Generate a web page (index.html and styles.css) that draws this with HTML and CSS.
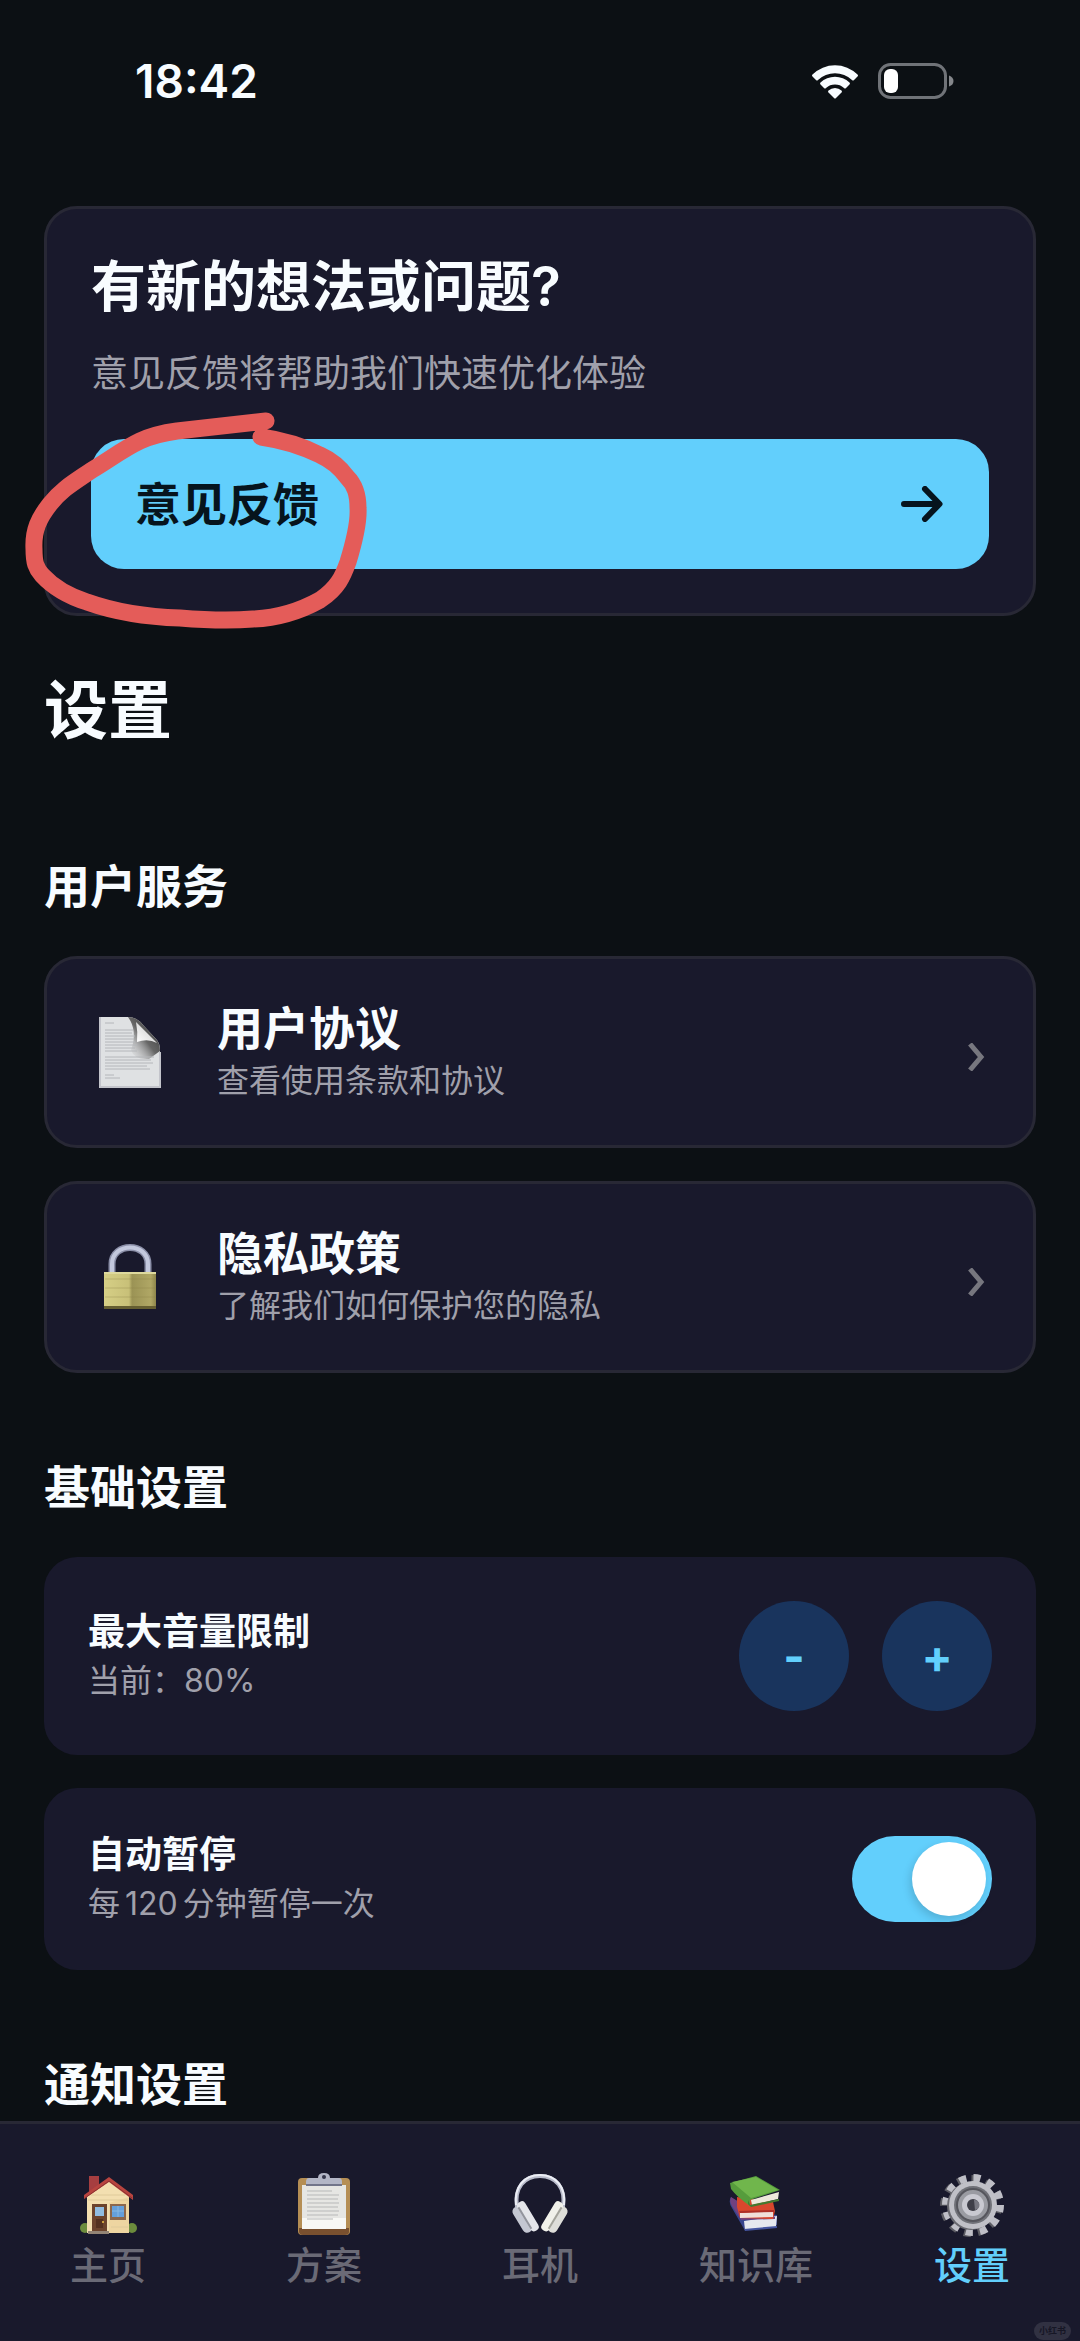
FILE: index.html
```html
<!DOCTYPE html>
<html lang="zh-CN">
<head>
  <meta charset="UTF-8" />
  <meta name="viewport" content="width=device-width, initial-scale=1.0"/>
  <title>设置</title>
  <link rel="stylesheet" href="styles.css">
</head>
<body>
  <header class="status-bar">
    <span class="time">18:42</span>
    <div class="status-icons">
      <svg width="48" height="36" viewBox="0 0 48 36" fill="#f8fcff" aria-hidden="true">
        <path d="M1.500 11.500A32 32 0 0 1 46.500 11.500Q47.500 12.500 46.500 13.500L43 17Q42 18 41 17A25 25 0 0 0 7 17Q6 18 5 17L1.500 13.500Q.500 12.500 1.500 11.500Z"/>
        <path d="M9.500 19.500A21 21 0 0 1 38.500 19.500Q39.500 20.500 38.500 21.500L35 25Q34 26 33 25A13.500 13.500 0 0 0 15 25Q14 26 13 25L9.500 21.500Q8.500 20.500 9.500 19.500Z"/>
        <path d="M17.500 27.500A9.500 9.500 0 0 1 30.500 27.500Q31.500 28.500 30.500 29.500L25 35Q24 36 23 35L17.500 29.500Q16.500 28.500 17.500 27.500Z"/>
      </svg>
      <svg width="76" height="36" viewBox="0 0 76 36" aria-hidden="true">
        <rect x="1.500" y="1.500" width="66" height="33" rx="11" fill="none" stroke="#707378" stroke-width="3"/>
        <rect x="6" y="6" width="14" height="24" rx="6" fill="#fff"/>
        <path d="M71 12.500Q75.500 14 75.500 18Q75.500 22 71 23.500Z" fill="#85878b"/>
      </svg>
    </div>
  </header>

  <main class="content">
    <section class="feedback-card">
      <h2 class="feedback-title">有新的想法或问题?</h2>
      <p class="feedback-text">意见反馈将帮助我们快速优化体验</p>
      <button type="button" class="feedback-btn">
        <span>意见反馈</span>
        <svg width="42" height="36" viewBox="0 0 42 36" fill="none" stroke="#06141d" stroke-width="6" stroke-linecap="round" stroke-linejoin="round" aria-hidden="true">
          <path d="M3 18H38M24 3L38.500 18L24 33"/>
        </svg>
      </button>
      <!-- hand-drawn marker -->
      <svg class="marker" width="350" height="226" viewBox="24 408 350 226" fill="none" stroke="#e45c59" stroke-width="17" stroke-linecap="round" stroke-linejoin="round" aria-hidden="true">
        <path d="M266 421L177 431Q155 434 140 441C123 449 112 458 92 470C73 483 62 489 50 504C39 518 33 530 34 549C34 563 36 568 42 575C53 587 68 596 87 602C115 612 147 617 180 618C205 620 229 621 253 619C280 618 302 610 320 600C338 588 343 576 348 562C355 539 359 522 358 508C358 494 355 485 347 477C339 466 331 460 320 455C302 446 282 440 261 437"/>
      </svg>
    </section>

    <h1>设置</h1>

    <h2 class="section-title">用户服务</h2>
    <div class="card-list">
      <a href="#" class="link-card">
        <span class="card-icon">
          <svg width="62" height="72" viewBox="0 0 62 72" aria-hidden="true">
            <defs>
              <linearGradient id="curl" x1="0" y1="1" x2="1" y2="0"><stop offset="0" stop-color="#fff"/><stop offset=".6" stop-color="#dcdcdc"/><stop offset="1" stop-color="#888"/></linearGradient>
              <linearGradient id="curlShade" x1="1" y1="0" x2="0" y2="1"><stop offset="0" stop-color="#333"/><stop offset=".5" stop-color="#666"/><stop offset="1" stop-color="#dededf" stop-opacity="0"/></linearGradient>
            </defs>
            <path d="M1 1H29Q38 1 44 9L57 23Q61 27 61 34V71H1Z" fill="#dfe1e3"/>
            <path d="M29 1Q38 1 44 9L57 23Q61 27 61 35L50 43Q35 44 32 34Q39 15 29 1Z" fill="url(#curlShade)"/>
            <path d="M37 6Q39 16 38 26Q49 22 58 27Z" fill="url(#curl)"/>
            <path d="M6 7H15M6 14H34M6 17H33M6 20H36M6 23H35M6 26H36M6 29H38M6 32H36M6 35H38M6 41H55M6 44H52M6 47H54M6 50H48M6 53H51M6 59H15M6 62H21" stroke="#b4b6ba" stroke-width="1"/>
            <path d="M1 1V71H61V36" fill="none" stroke="#c3c4cb" stroke-width="2"/>
          </svg>
        </span>
        <span class="card-text">
          <span class="card-title">用户协议</span>
          <span class="card-desc">查看使用条款和协议</span>
        </span>
        <svg class="chevron" width="18" height="28" viewBox="0 0 18 28" fill="none" stroke="#77777f" stroke-width="5" aria-hidden="true"><path d="M3 1L14 14L3 27"/></svg>
      </a>
      <a href="#" class="link-card">
        <span class="card-icon">
          <svg width="54" height="66" viewBox="0 0 54 66" aria-hidden="true">
            <defs>
              <linearGradient id="brass"><stop offset="0" stop-color="#d6cf86"/><stop offset=".48" stop-color="#c8c078"/><stop offset=".54" stop-color="#9b9355"/><stop offset=".9" stop-color="#b0a765"/><stop offset="1" stop-color="#8d854a"/></linearGradient>
            </defs>
            <path d="M9 30V20C9 -2 45 -2 45 20V30" fill="none" stroke="#8b8fa8" stroke-width="7"/>
            <path d="M9 30V20C9 -2 45 -2 45 20V30" fill="none" stroke="#c3c8dd" stroke-width="4"/>
            <rect x="1" y="28" width="52" height="37" rx="1" fill="url(#brass)"/>
            <path d="M2 35H52M2 44H52M2 53H52" stroke="#8a8247" stroke-opacity=".35"/>
            <path d="M1 29H53" stroke="#ded99d" stroke-width="2"/>
            <path d="M1 62H53V65H1Z" fill="#655e31"/>
          </svg>
        </span>
        <span class="card-text">
          <span class="card-title">隐私政策</span>
          <span class="card-desc">了解我们如何保护您的隐私</span>
        </span>
        <svg class="chevron" width="18" height="28" viewBox="0 0 18 28" fill="none" stroke="#77777f" stroke-width="5" aria-hidden="true"><path d="M3 1L14 14L3 27"/></svg>
      </a>
    </div>

    <h2 class="section-title">基础设置</h2>
    <div class="card-list">
      <div class="setting-card">
        <div class="card-text">
          <span class="setting-title">最大音量限制</span>
          <span class="card-desc">当前：80%</span>
        </div>
        <div class="stepper">
          <button type="button" class="step-btn" aria-label="降低音量">-</button>
          <button type="button" class="step-btn" aria-label="提高音量">+</button>
        </div>
      </div>
      <div class="setting-card">
        <label class="card-text" for="autoPause">
          <span class="setting-title">自动暂停</span>
          <span class="card-desc">每<span class="minutes">120</span>分钟暂停一次</span>
        </label>
        <input type="checkbox" id="autoPause" class="switch" checked>
      </div>
    </div>

    <h2 class="section-title">通知设置</h2>
  </main>

  <nav class="tab-bar">
    <a href="#" class="tab">
      <svg width="64" height="64" viewBox="0 0 64 64" aria-hidden="true">
        <circle cx="9" cy="55" r="5" fill="#6c8c3d"/><circle cx="56" cy="55" r="5" fill="#6c8c3d"/>
        <path d="M13 3H23V13L13 21Z" fill="#a63e40"/>
        <path d="M11 22L33 7L53 22V60H11Z" fill="#f3dfb0"/>
        <path d="M33 60V30L53 24V60Z" fill="#ebcf98" opacity=".6"/>
        <path d="M15 22H49M12 27H52M35 54H52" stroke="#dfca9a"/>
        <path d="M8 26V22L33 4L57 22V27L33 9Z" fill="#b8443f"/>
        <path d="M9 25L33 8L56 25" fill="none" stroke="#8d3031"/>
        <rect x="16" y="31" width="15" height="27" fill="#6c432c"/>
        <rect x="19" y="34" width="9" height="9" fill="#91bce0"/>
        <path d="M20 46H27V55H20Z" fill="#54301f"/><circle cx="27" cy="49" r="1" fill="#f0c04a"/>
        <rect x="34" y="31" width="16" height="16" fill="#8c674d"/>
        <rect x="36" y="33" width="12" height="11" fill="#659fdb"/>
        <path d="M36 38H48M42 33V44" stroke="#89b7e1"/>
        <path d="M12 58H33V61H12Z" fill="#938475"/>
      </svg>
      <span>主页</span>
    </a>
    <a href="#" class="tab">
      <svg width="64" height="64" viewBox="0 0 64 64" aria-hidden="true">
        <rect x="6" y="5" width="52" height="57" rx="4" fill="#b58e54"/>
        <path d="M7 55H57V59Q57 62 53 62H11Q7 62 7 58Z" fill="#79502f"/>
        <path d="M10 12H54V56H10Z" fill="#e6e6e3"/>
        <path d="M10 45H54V56H10Z" fill="#f8f8f5"/>
        <path d="M15 18H40M15 22H47M15 26H46M15 30H47M15 34H46M15 38H47M15 42H46M15 46H41" stroke="#b7b8b8"/>
        <path d="M17 5H26Q26 0 32 0Q38 0 38 5H47Q50 5 50 9V12H14V9Q14 5 17 5Z" fill="#b3b6c6"/>
        <path d="M14 12H50" stroke="#72758a" stroke-width="2"/>
        <circle cx="32" cy="4" r="2" fill="#35364b"/>
      </svg>
      <span>方案</span>
    </a>
    <a href="#" class="tab">
      <svg width="64" height="64" viewBox="0 0 64 64" aria-hidden="true">
        <path d="M9 34C6 15 16 3 32 3C48 3 58 15 55 34" fill="none" stroke="#b9bccb" stroke-width="4"/>
        <path d="M8 32C6 14 16 2 32 2C48 2 58 14 56 32" fill="none" stroke="#eceef5" stroke-width="2"/>
        <g transform="rotate(-31 18 45)"><rect x="9" y="30" width="10" height="29" rx="5" fill="#c4c7d2"/><rect x="16" y="28" width="9" height="33" rx="4" fill="#e4e5ea"/><path d="M17 32V57" stroke="#92949d" stroke-width="2"/></g>
        <g transform="rotate(31 46 45)"><rect x="45" y="30" width="10" height="29" rx="5" fill="#deded9"/><rect x="39" y="28" width="9" height="33" rx="4" fill="#f1f1ea"/><path d="M47 32V57" stroke="#a4a49c" stroke-width="2"/></g>
      </svg>
      <span>耳机</span>
    </a>
    <a href="#" class="tab">
      <svg width="64" height="64" viewBox="0 0 64 64" aria-hidden="true">
        <path d="M7 24Q4 29 8 35L20 56L53 52V42L25 38Z" fill="#37458e"/>
        <path d="M20 48L53 43L52 54L21 57Z" fill="#e5e8ef"/>
        <path d="M20 56L53 53V55L21 58Z" fill="#4455a0"/>
        <path d="M7 24Q5 29 8 33L17 47L51 46V44L25 35Z" fill="#70417f"/>
        <path d="M13 24L49 29L51 38L49 46L16 45L13 34Z" fill="#d8472d"/>
        <path d="M16 40L49 38V44L16 45Z" fill="#f0dfd9"/>
        <path d="M15 38L50 37V39L16 40Z" fill="#ac2f27"/>
        <path d="M6 10L32 3L56 17L26 27V33Q13 24 7 16Z" fill="#569c3c"/>
        <path d="M8 9L32 4L54 17L27 25Z" fill="#70b64c"/>
        <path d="M27 27L55 19L54 26L28 32Z" fill="#eee9db"/>
        <path d="M26 32L55 26V28L27 34L24 31V27Z" fill="#43792f"/>
      </svg>
      <span>知识库</span>
    </a>
    <a href="#" class="tab active">
      <svg width="64" height="64" viewBox="0 0 64 64" aria-hidden="true">
        <g fill="none" stroke-dasharray="7 7.137">
          <circle cx="31" cy="33" r="27" stroke="#5c5c63" stroke-width="8"/>
          <circle cx="33" cy="32" r="27" stroke="#bebec6" stroke-width="8"/>
        </g>
        <circle cx="31" cy="33" r="24" fill="#68686f"/>
        <circle cx="33" cy="32" r="24" fill="#c0c0c7"/>
        <circle cx="33" cy="32" r="19" fill="#707178"/>
        <circle cx="33" cy="32" r="16" fill="#9a9ba2" stroke="#56565d" stroke-width="2"/>
        <circle cx="33" cy="32" r="11" fill="#c9c9d1"/>
        <circle cx="33" cy="32" r="6" fill="#3e3e48"/>
        <path d="M34 27A5 5 0 0 1 35 37" fill="#777781"/>
      </svg>
      <span>设置</span>
    </a>
    <span class="watermark">小红书</span>
  </nav>
</body>
</html>
```
FILE: styles.css
```css
* {
  box-sizing: border-box;
}

body {
  font-family: Inter, "Noto Sans CJK SC", sans-serif;
  margin: 0;
  min-height: 100vh;
  display: flex;
  flex-direction: column;
  background-color: #0c1014;
  color: #f8fcff;
}

h1, h2, p {
  margin: 0;
}

a {
  color: inherit;
  text-decoration: none;
}

button {
  font-family: inherit;
  border: none;
  cursor: pointer;
}

.status-bar {
  display: flex;
  align-items: center;
  justify-content: space-between;
  padding: 52px 126px 96px 135px;
}

.time {
  font-size: 46px;
  font-weight: 600;
  line-height: 58px;
}

.status-icons {
  display: flex;
  gap: 19px;
}

.content {
  flex: 1;
  padding: 0 44px;
}

.feedback-card {
  position: relative;
  padding: 44px;
  background-color: #19192c;
  border: 3px solid #282835;
  border-radius: 33px;
}

.feedback-title {
  font-size: 55px;
  font-weight: 600;
  line-height: 66px;
}

.feedback-text {
  margin: 32px 0 42px;
  font-size: 37px;
  line-height: 46px;
  color: #a0a0ab;
}

.feedback-btn {
  display: flex;
  align-items: center;
  justify-content: space-between;
  width: 100%;
  padding: 36px 46px 36px 44px;
  background-color: #62cffc;
  border-radius: 33px;
  color: #06141d;
  font-size: 46px;
  font-weight: 600;
  line-height: 58px;
}

.marker {
  position: absolute;
  top: 199px;
  left: -23px;
  pointer-events: none;
}

h1 {
  margin: 54px 0 106px;
  font-size: 64px;
  font-weight: 600;
  line-height: 80px;
}

.section-title {
  margin: 84px 0 40px;
  font-size: 46px;
  font-weight: 600;
  line-height: 60px;
}

.section-title:last-child {
  margin-bottom: 0;
}

.card-list {
  display: flex;
  flex-direction: column;
  gap: 33px;
}

.link-card,
.setting-card {
  display: flex;
  align-items: center;
  padding: 44px;
  background-color: #19192c;
  border-radius: 33px;
}

.link-card {
  padding: 42px 44px;
  border: 3px solid #282835;
}

.setting-card {
  padding: 44px;
}

.card-icon {
  display: flex;
  justify-content: center;
  width: 78px;
  margin-right: 48px;
}

.card-text {
  flex: 1;
  display: flex;
  flex-direction: column;
  gap: 4px;
}

.card-title {
  font-size: 46px;
  font-weight: 600;
  line-height: 54px;
}

.card-desc {
  font-size: 32px;
  line-height: 44px;
  color: #a0a0ab;
}

.minutes {
  margin: 0 5px;
}

.chevron {
  margin: 10px 4px 0 0;
}

.setting-title {
  font-size: 37px;
  font-weight: 600;
  line-height: 46px;
}

.stepper {
  display: flex;
  gap: 33px;
}

.step-btn {
  width: 110px;
  height: 110px;
  padding: 0;
  border-radius: 50%;
  background-color: #19345d;
  color: #62cffc;
  font-size: 46px;
  font-weight: 700;
}

.switch {
  appearance: none;
  display: flex;
  justify-content: flex-end;
  width: 140px;
  height: 86px;
  margin: 0;
  padding: 6px;
  border-radius: 43px;
  background-color: #62cffc;
  cursor: pointer;
}

.switch::before {
  content: "";
  width: 74px;
  height: 74px;
  border-radius: 50%;
  background-color: #fff;
  box-shadow: -2px 4px 8px rgba(0, 0, 0, 0.15);
}

.switch:not(:checked) {
  justify-content: flex-start;
  background-color: #3a3a4a;
}

.tab-bar {
  position: relative;
  display: flex;
  padding: 49px 0 53px;
  background-color: #19192c;
  border-top: 3px solid #282835;
}

.tab {
  flex: 1;
  display: flex;
  flex-direction: column;
  align-items: center;
  gap: 5px;
  color: #6a6a76;
  font-size: 38px;
  font-weight: 500;
  line-height: 46px;
}

.tab.active {
  color: #62cffc;
}

.watermark {
  position: absolute;
  right: 9px;
  bottom: 1px;
  padding: 0 5px;
  border-radius: 9px;
  background-color: #313142;
  color: #161625;
  font-size: 9px;
  font-weight: 700;
  line-height: 18px;
}
```
